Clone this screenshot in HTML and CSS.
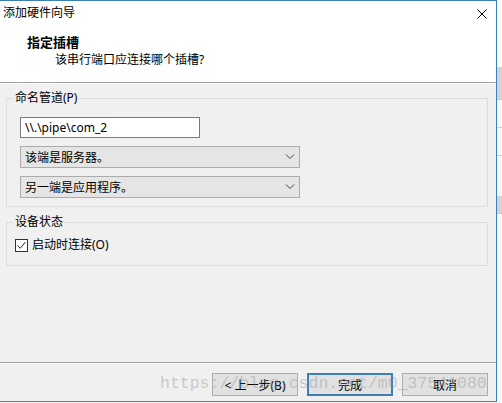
FILE: index.html
```
<!DOCTYPE html>
<html lang="zh-CN">
<head>
    <meta charset="UTF-8">
    <title>添加硬件向导</title>
    <link rel="stylesheet" href="styles.css">
</head>
<body>
    <div class="desktop">
        <div class="wizard">
            <div class="title-bar">
                <span class="title-text">添加硬件向导</span>
                <svg class="close-icon" width="10" height="10" viewBox="0 0 10 10">
                    <path d="M0.5 0.5 L9.5 9.5 M9.5 0.5 L0.5 9.5" stroke="#000" stroke-width="1" fill="none"/>
                </svg>
            </div>

            <div class="wizard-header">
                <h1>指定插槽</h1>
                <p>该串行端口应连接哪个插槽?</p>
            </div>

            <div class="wizard-body">
                <fieldset class="group">
                    <legend>命名管道(P)</legend>
                    <div class="text-field">\\.\pipe\com_2</div>
                    <div class="combo">
                        <span>该端是服务器。</span>
                        <svg width="10" height="6" viewBox="0 0 10 6"><path d="M1 0.5 L5 4.5 L9 0.5" stroke="#444" fill="none"/></svg>
                    </div>
                    <div class="combo">
                        <span>另一端是应用程序。</span>
                        <svg width="10" height="6" viewBox="0 0 10 6"><path d="M1 0.5 L5 4.5 L9 0.5" stroke="#444" fill="none"/></svg>
                    </div>
                </fieldset>

                <fieldset class="group group-status">
                    <legend>设备状态</legend>
                    <label class="check-row">
                        <span class="check-box">
                            <svg width="11" height="11" viewBox="0 0 11 11"><path d="M1.5 5.5 L4.2 8.3 L9.5 2" stroke="#222" stroke-width="1" fill="none"/></svg>
                        </span>
                        启动时连接(O)
                    </label>
                </fieldset>
            </div>

            <div class="wizard-footer">
                <button class="btn">&lt; 上一步(B)</button>
                <button class="btn btn-default">完成</button>
                <button class="btn">取消</button>
                <span class="watermark">https://blog.csdn.net/m0_37541080</span>
            </div>
        </div>

        <!-- 后面那个窗口露出的一条边 -->
        <div class="behind">
            <span class="behind-top"></span>
            <span class="behind-tab"></span>
            <span class="behind-row"></span>
            <span class="behind-row"></span>
            <span class="behind-tab small"></span>
        </div>
    </div>
</body>
</html>
```

FILE: styles.css
```
* {
    margin: 0;
    padding: 0;
    box-sizing: border-box;
}

body {
    background: #fafafa;
    font-family: "Noto Sans", "Noto Sans CJK SC", sans-serif;
    font-size: 12px;
    color: #000;
    overflow: hidden;
}

.desktop {
    display: flex;
    height: 403px;
}

.wizard {
    width: 497px;
    height: 402px;
    border-top: 1px solid #3c80b4;
    border-right: 1px solid #3c80b4;
    border-bottom: 1px solid #3c80b4;
    display: flex;
    flex-direction: column;
    background: #f0f0f0;
}

.title-bar {
    height: 24px;
    background: #fff;
    display: flex;
    align-items: center;
    justify-content: space-between;
    padding: 0 9px 0 3px;
}

.title-text {
    line-height: 24px;
}

.close-icon {
    display: block;
    margin-top: 1px;
}

.wizard-header {
    background: #fff;
    padding: 8px 0 13px;
    border-bottom: 1px solid #a0a0a0;
    height: 58px;
}

.wizard-header h1 {
    font-size: 13px;
    font-weight: bold;
    line-height: 18px;
    padding-left: 27px;
}

.wizard-header p {
    line-height: 18px;
    padding-left: 55px;
}

.wizard-body {
    flex: 1;
    padding-top: 7px;
    box-shadow: inset 0 1px 0 #fff;
}

.group {
    border: 1px solid #dcdcdc;
    margin: 0 8px 0 6px;
    padding: 11px 13px 8px;
}

.group legend {
    line-height: 16px;
    padding: 0 2px;
    margin-left: -7px;
}

.text-field {
    width: 180px;
    height: 21px;
    background: #fff;
    border: 1px solid #7a7a7a;
    line-height: 19px;
    padding-left: 4px;
}

.combo {
    width: 280px;
    height: 22px;
    margin-top: 8px;
    background: #e5e5e5;
    border: 1px solid #acacac;
    display: flex;
    align-items: center;
    justify-content: space-between;
    padding: 0 4px 0 4px;
}

.combo + .combo {
    margin-top: 8px;
}

.combo svg {
    display: block;
    margin-right: 0;
}

.group-status {
    margin-top: 7px;
    padding: 7px 13px 12px 8px;
}

.group-status legend {
    margin-left: -2px;
}

.check-row {
    display: flex;
    align-items: center;
    gap: 4px;
    line-height: 16px;
}

.check-box {
    width: 13px;
    height: 13px;
    border: 1px solid #333;
    background: #fff;
    display: flex;
    align-items: center;
    justify-content: center;
}

.check-box svg {
    display: block;
}

.wizard-footer {
    position: relative;
    border-top: 1px solid #a0a0a0;
    box-shadow: inset 0 1px 0 #fff;
    display: flex;
    justify-content: flex-end;
    gap: 9px;
    padding: 10px 8px 5px 0;
}

.btn {
    width: 86px;
    height: 23px;
    font-family: inherit;
    font-size: 12px;
    background: #e1e1e1;
    border: 1px solid #adadad;
    color: #000;
}

.btn-default {
    border: 2px solid #3c80b4;
}

.watermark {
    position: absolute;
    left: 160px;
    top: 9px;
    font-family: "Liberation Mono", monospace;
    font-size: 16.5px;
    line-height: 24px;
    color: rgba(150, 150, 150, 0.45);
    white-space: nowrap;
    pointer-events: none;
}

.behind {
    flex: 1;
    display: flex;
    flex-direction: column;
    background: #f7f7f7;
}

.behind-top {
    height: 67px;
    background: #fff;
}

.behind-tab {
    height: 33px;
    background: #d8d2d8;
    border-bottom: 1px solid #c8c8c8;
}

.behind-tab.small {
    height: 18px;
    margin-top: 40px;
}

.behind-row {
    height: 28px;
    border-bottom: 1px solid #d0d0d0;
}
```
